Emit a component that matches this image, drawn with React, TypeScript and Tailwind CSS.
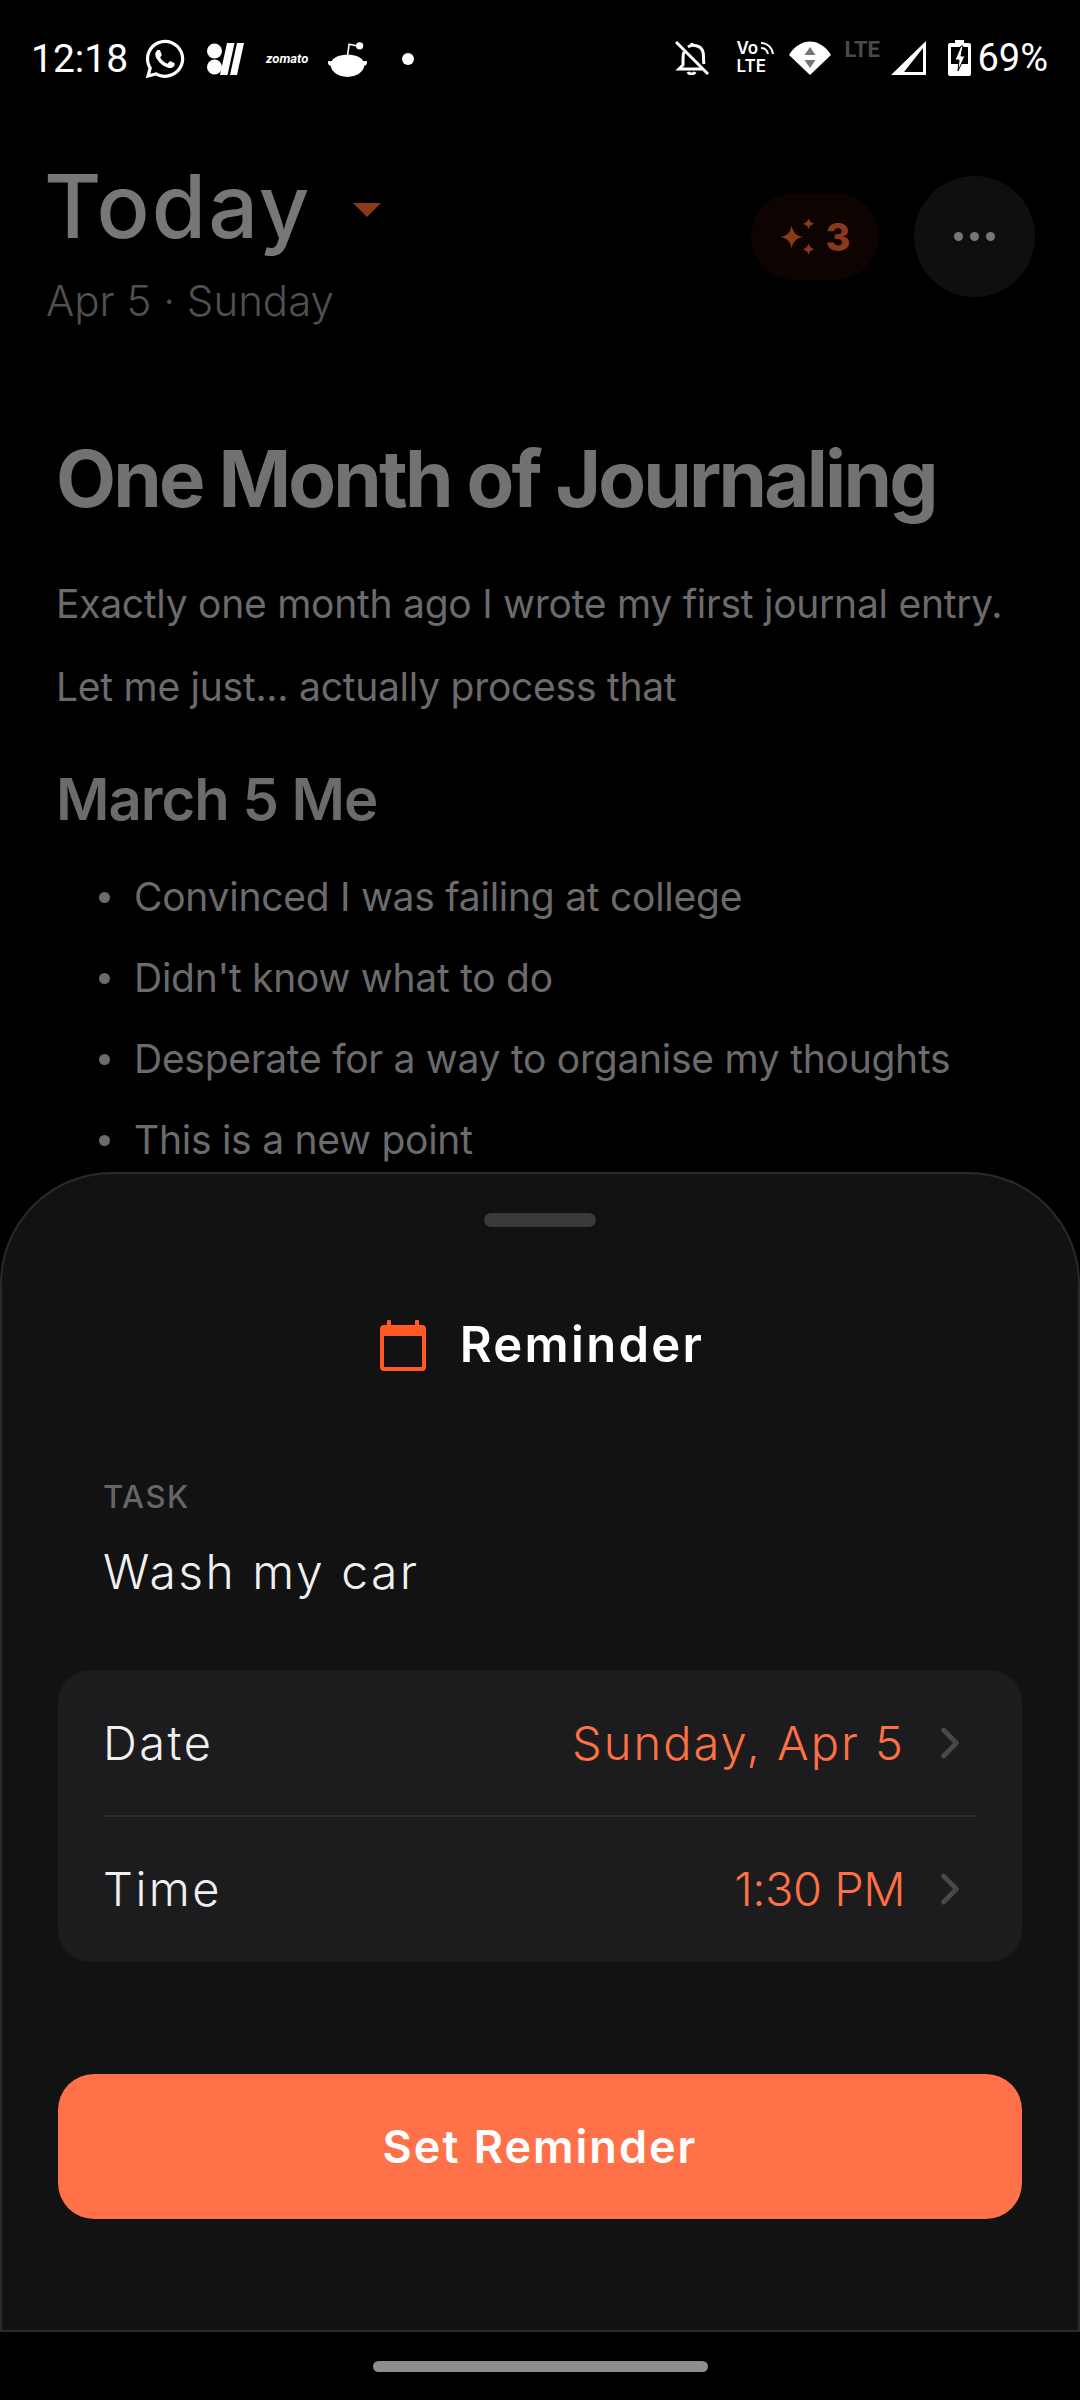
import { ChevronRight } from "lucide-react";
import { FaWhatsapp } from "react-icons/fa";

const points = [
  "Convinced I was failing at college",
  "Didn't know what to do",
  "Desperate for a way to organise my thoughts",
  "This is a new point",
];

function StatusBar() {
  return (
    <div className="flex h-[116px] items-start justify-between pl-[31px] pr-[32px] pt-[39px] text-white font-[Roboto,sans-serif]">
      <div className="flex h-[39px] items-center">
        <span className="w-[112px] text-[39px] leading-[38px]">12:18</span>
        <FaWhatsapp className="h-[44px] w-[44px]" />
        <svg viewBox="0 0 37 32" className="ml-[20px] h-[32px] w-[37px]" fill="white">
          <circle cx="7.5" cy="8" r="7.5" />
          <circle cx="7.5" cy="24" r="7.5" />
          <path d="M20 0h7.500l-7 32h-7.500zM30 0h7l-7 32h-7z" />
        </svg>
        <span className="ml-[22px] w-[40px] text-[13px] font-bold italic leading-none">zomato</span>
        <svg viewBox="0 0 37 34" className="ml-[22px] h-[36px] w-[39px]" fill="white">
          <path d="M18.500 13c8 0 13 2.500 15 6 2 .500 3.500-1 3.500 1.500 0 1.500-1 2.500-2.500 3-1 6-7.500 10.500-16 10.500S3.500 29.500 2.500 23.500C1 23 0 22 0 20.500 0 18 1.500 19.500 3.500 19c2-3.500 7-6 15-6z" />
          <path d="M18.500 14 20 3l7 1.500" fill="none" stroke="white" strokeWidth="1.500" />
          <circle cx="30" cy="4.500" r="3.500" />
        </svg>
        <span className="ml-[35px] h-[12px] w-[12px] rounded-full bg-white" />
      </div>
      <div className="flex h-[37px] items-center">
        <svg viewBox="0 0 34 34" className="h-[34px] w-[34px]" fill="none" stroke="white" strokeWidth="3">
          <path d="M1 1l32 32" />
          <path d="M9 11c-1 2-1 4-1 7v6l-4 4h23" />
          <path d="M13 6c4-3 13-2 15 5 1 3 0 8 1 12" />
          <path d="M17 5V2M13 31c1 2.500 6 2.500 7 0" />
        </svg>
        <div className="relative ml-[27px] flex h-[33px] w-[38px] flex-col justify-between text-[17px] font-semibold leading-[15px] font-[Inter,sans-serif]">
          <span>Vo</span>
          <span>LTE</span>
          <svg viewBox="0 0 14 14" className="absolute right-0 top-0 h-[14px] w-[14px]" fill="none" stroke="white" strokeWidth="2">
            <path d="M1 2c6 0 11 4 12 11M1 7c3 0 6 2 7 6" />
          </svg>
        </div>
        <svg viewBox="0 0 42 34" className="ml-[15px] h-[34px] w-[42px]">
          <path d="M0 14C11 -4 31 -4 42 14L21 34z" fill="white" />
          <path d="M21 6l5.500 8h-11z" fill="#777" />
          <path d="M21 27l-5.500-8h11z" fill="#777" />
        </svg>
        <div className="ml-[13px] flex h-[34px] w-[40px] items-start">
          <span className="text-[22px] font-bold leading-[17px] text-[#4a4a4a]">LTE</span>
        </div>
        <svg viewBox="0 0 35 34" className="ml-[7px] h-[34px] w-[35px]" fill="white">
          <path fillRule="evenodd" d="M35 0v34H0zM32 7 13 31h19z" />
        </svg>
        <svg viewBox="0 0 23 36" className="ml-[22px] h-[36px] w-[23px]" fill="white">
          <path d="M7 0h9v3h5a2 2 0 0 1 2 2v29a2 2 0 0 1-2 2H2a2 2 0 0 1-2-2V5a2 2 0 0 1 2-2h5z" />
          <path d="M3 7h17v17H3z" fill="#000" />
          <path d="M13 6 7 20h4l-1 11 7-15h-4l2-10z" fill="white" stroke="#000" strokeWidth="1" />
        </svg>
        <span className="ml-[6px] text-[38px] leading-[38px]">69%</span>
      </div>
    </div>
  );
}

function Sparkles() {
  return (
    <svg viewBox="0 0 34 36" className="h-[38px] w-[36px]" fill="#8a3a1a">
      <path d="M11 7c1 6 4 10 11 11-7 1-10 5-11 11C10 23 7 19 0 18 7 17 10 13 11 7z" />
      <path d="M27 0c.500 3 2 4.500 5.500 5.500-3.500 1-5 2.500-5.500 5.500-.500-3-2-4.500-5.500-5.500C25 4.500 26.500 3 27 0z" />
      <path d="M27 24c.500 3 2 4.500 5.500 5.500-3.500 1-5 2.500-5.500 5.500-.500-3-2-4.500-5.500-5.500 3.500-1 5-2.500 5.500-5.500z" />
    </svg>
  );
}

function Header() {
  return (
    <div className="flex items-start justify-between pl-[46px] pr-[45px]">
      <div>
        <div className="flex items-center">
          <span className="-ml-[2px] text-[88px] font-medium leading-[116px] tracking-[2px] text-[#777777]">Today</span>
          <span className="ml-[42px] mt-[8px] h-0 w-0 border-x-[14px] border-t-[14px] border-x-transparent border-t-[#8a3a1a]" />
        </div>
        <div className="mt-[10px] text-[42px] font-light leading-[54px] text-[#505050]">Apr 5 · Sunday</div>
      </div>
      <div className="mt-[28px] flex items-center gap-[35px]">
        <div className="flex h-[87px] w-[128px] items-center justify-center gap-[10px] rounded-full bg-[#0d0402]">
          <Sparkles />
          <span className="text-[38px] font-extrabold leading-none text-[#8a3a1a]">3</span>
        </div>
        <div className="flex h-[121px] w-[121px] items-center justify-center gap-[7px] rounded-full bg-[#0f0f0f]">
          <span className="h-[9px] w-[9px] rounded-full bg-[#777777]" />
          <span className="h-[9px] w-[9px] rounded-full bg-[#777777]" />
          <span className="h-[9px] w-[9px] rounded-full bg-[#777777]" />
        </div>
      </div>
    </div>
  );
}

function Note() {
  return (
    <div className="pl-[56px] pt-[101px]">
      <h1 className="text-[78px] font-bold leading-[100px] tracking-[-2.800px] text-[#727272]">One Month of Journaling</h1>
      <p className="mt-[44px] text-[39px] leading-[62px] tracking-[-0.260px] text-[#6b6b6b]">Exactly one month ago I wrote my first journal entry.</p>
      <p className="mt-[21px] text-[39px] leading-[62px] tracking-[-0.260px] text-[#6b6b6b]">Let me just... actually process that</p>
      <h2 className="mt-[43px] text-[58px] font-semibold leading-[76px] tracking-[-1px] text-[#6b6b6b]">March 5 Me</h2>
      <ul className="mt-[29px] flex flex-col gap-[19px]">
        {points.map((point) => (
          <li key={point} className="flex h-[62px] items-center text-[39px] tracking-[-0.260px] text-[#6b6b6b]">
            <span className="ml-[43px] mr-[24px] h-[11px] w-[11px] rounded-full bg-[#6b6b6b]" />
            {point}
          </li>
        ))}
      </ul>
    </div>
  );
}

function ReminderRow({ label, value, valueClass }: { label: string; value: string; valueClass: string }) {
  return (
    <div className="flex h-[146px] items-center justify-between pr-[4px]">
      <span className="text-[47px] font-light tracking-[2.500px] text-[#f0f0f0]">{label}</span>
      <div className="flex items-center gap-[19px]">
        <span className={`text-[47px] font-light text-[#ff7043] ${valueClass}`}>{value}</span>
        <ChevronRight className="h-[52px] w-[52px] text-[#48484a]" strokeWidth={2.200} />
      </div>
    </div>
  );
}

function ReminderSheet() {
  return (
    <div className="absolute inset-x-0 top-[1172px] flex h-[1160px] flex-col rounded-t-[112px] border-2 border-[#2a2a2a] bg-[#121212] px-[56px] pt-[39px]">
      <div className="mx-auto h-[14px] w-[112px] rounded-full bg-[#3a3a3a]" />
      <div className="mt-[88px] flex items-center justify-center gap-[34px] pl-[4px]">
        <svg viewBox="0 0 46 51" className="h-[51px] w-[46px]" fill="#ff5a24">
          <path
            fillRule="evenodd"
            d="M7 1.500a2 2 0 0 1 4 0V5h24V1.500a2 2 0 0 1 4 0V5h3a4 4 0 0 1 4 4v38a4 4 0 0 1-4 4H4a4 4 0 0 1-4-4V9a4 4 0 0 1 4-4h3zM4 16v30a1 1 0 0 0 1 1h36a1 1 0 0 0 1-1V16z"
          />
        </svg>
        <span className="text-[49px] font-semibold leading-[60px] tracking-[2.300px] text-white">Reminder</span>
      </div>
      <div className="ml-[45px] mt-[102px] text-[31px] font-medium leading-[40px] tracking-[1.500px] text-[#666666]">TASK</div>
      <div className="ml-[45px] mt-[23px] text-[48px] font-light leading-[64px] tracking-[2.500px] text-[#f0f0f0]">Wash my car</div>
      <div className="mt-[66px] flex h-[292px] flex-col rounded-[32px] bg-[#1c1c1e] pl-[45px] pr-[42px]">
        <ReminderRow label="Date" value="Sunday, Apr 5" valueClass="tracking-[2px]" />
        <div className="my-[-1px] mr-[3px] h-[2px] bg-[#2c2c2e]" />
        <ReminderRow label="Time" value="1:30 PM" valueClass="tracking-[-0.500px]" />
      </div>
      <button className="mt-[112px] flex h-[145px] items-center justify-center rounded-[36px] bg-[#ff7249] text-[45px] font-semibold tracking-[2px] text-white">
        Set Reminder
      </button>
    </div>
  );
}

export default function App() {
  return (
    <div className="relative flex h-[2400px] w-[1080px] flex-col overflow-hidden bg-black font-[Inter,sans-serif]">
      <StatusBar />
      <div className="flex flex-col pt-[32px]">
        <Header />
        <Note />
      </div>
      <ReminderSheet />
      <div className="absolute inset-x-0 bottom-[28px] flex justify-center">
        <div className="h-[11px] w-[335px] rounded-full bg-[#8e8e8e]" />
      </div>
    </div>
  );
}
